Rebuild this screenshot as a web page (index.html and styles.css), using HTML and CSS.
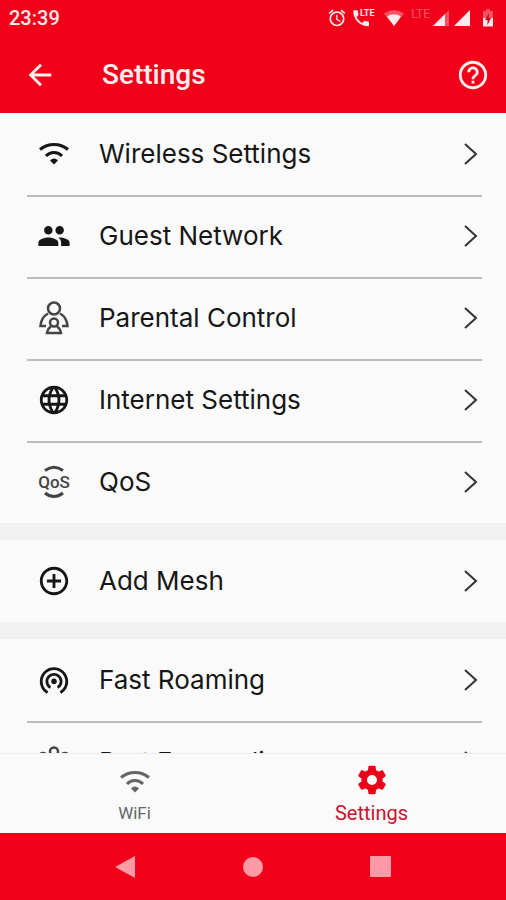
FILE: index.html
```
<!DOCTYPE html>
<html lang="en">
	<head>
		<meta charset="UTF-8" />
		<meta name="viewport" content="width=device-width, initial-scale=1.0" />
		<title>Settings</title>
		<link rel="stylesheet" href="styles.css">
	</head>
	<body>
		<div class="statusbar">
			<span class="time">23:39</span>
			<div class="indicators">
				<svg class="alarm" viewBox="0 0 24 24"><path d="M22 5.72l-4.6-3.86-1.29 1.53 4.6 3.86L22 5.72zM7.88 3.39L6.6 1.86 2 5.71l1.29 1.53 4.59-3.85zM12.5 8H11v6l4.75 2.85.75-1.23-4-2.37V8zM12 4c-4.97 0-9 4.03-9 9s4.02 9 9 9c4.97 0 9-4.03 9-9s-4.03-9-9-9zm0 16c-3.87 0-7-3.13-7-7s3.13-7 7-7 7 3.13 7 7-3.13 7-7 7z" /></svg>
				<svg class="call" viewBox="0 0 24 20">
					<path d="M4.6 9.2c1.3 2.5 3.2 4.5 5.6 5.8l1.9-1.9c.3-.3.6-.3.9-.2 1 .3 2.1.5 3.2.5.5 0 .8.4.8.9v3c0 .5-.3.9-.8.9C8 18.200 1.200 11.400 1.200 3.200c0-.5.4-.9.9-.9h3c.5 0 .9.4.9.9 0 1.100.2 2.200.5 3.200.1.3 0 .7-.2.9z" />
					<text x="8" y="8">LTE</text>
				</svg>
				<svg class="wifi-signal" viewBox="0 0 22 18">
					<path class="dim" d="M1 4.500Q11-2.500 21 4.500L11 17z" />
					<path d="M4 7.500Q11 3 18 7.500L11 17z" />
				</svg>
				<span class="lte">LTE</span>
				<svg class="signal" viewBox="0 0 18 18">
					<path class="dim" d="M17 1v16H1z" />
					<path d="M13 5v12H1z" />
				</svg>
				<svg class="signal" viewBox="0 0 18 18"><path d="M17 1v16H1z" /></svg>
				<svg class="battery" viewBox="0 0 12 20">
					<path class="dim" d="M4 1h4v2h3v7H1V3h3z" />
					<path d="M1 10h10v8.500H1z" />
					<path class="bolt" d="M7 5L3 12h2.500v5L9 10H6.500z" />
				</svg>
			</div>
		</div>

		<header class="appbar">
			<button type="button" aria-label="Back">
				<svg viewBox="0 0 24 24"><path d="M20 11H7.83l5.59-5.59L12 4l-8 8 8 8 1.41-1.41L7.83 13H20v-2z" /></svg>
			</button>
			<h1>Settings</h1>
			<button type="button" aria-label="Help">
				<svg viewBox="0 0 24 24"><path d="M11 18h2v-2h-2v2zm1-16C6.48 2 2 6.48 2 12s4.48 10 10 10 10-4.48 10-10S17.52 2 12 2zm0 18c-4.410 0-8-3.590-8-8s3.590-8 8-8 8 3.590 8 8-3.590 8-8 8zm0-14c-2.210 0-4 1.790-4 4h2c0-1.100.9-2 2-2s2 .9 2 2c0 2-3 1.750-3 5h2c0-2.250 3-2.500 3-5 0-2.210-1.790-4-4-4z" /></svg>
			</button>
		</header>

		<main>
			<ul>
				<li>
					<a href="#wireless">
						<svg class="icon line" viewBox="0 0 34 34">
							<path d="M3 12.500A22 22 0 0 1 31 12.500M9 19A11 11 0 0 1 25 19" />
							<path class="solid" d="M13 23.500Q17 19.500 21 23.500L17 27.500z" />
						</svg>
						<span>Wireless Settings</span>
						<svg class="chevron" viewBox="0 0 14 22"><path d="M1 1l11 10L1 21" /></svg>
					</a>
				</li>
				<li>
					<a href="#guest">
						<svg class="icon" viewBox="0 0 24 24"><path d="M16 11c1.660 0 2.990-1.340 2.990-3S17.660 5 16 5c-1.660 0-3 1.340-3 3s1.340 3 3 3zm-8 0c1.660 0 2.990-1.340 2.990-3S9.660 5 8 5C6.340 5 5 6.340 5 8s1.340 3 3 3zm0 2c-2.330 0-7 1.170-7 3.500V19h14v-2.500c0-2.330-4.670-3.500-7-3.500zm8 0c-.29 0-.62.02-.97.05 1.160.84 1.970 1.970 1.970 3.450V19h6v-2.500c0-2.330-4.670-3.500-7-3.500z" /></svg>
						<span>Guest Network</span>
						<svg class="chevron" viewBox="0 0 14 22"><path d="M1 1l11 10L1 21" /></svg>
					</a>
				</li>
				<li>
					<a href="#parental">
						<svg class="icon line thin" viewBox="0 0 34 34">
							<circle cx="17" cy="7.500" r="6" />
							<path d="M11 12.500C6.500 15 4 19 3.500 25H9M23 12.500C27.500 15 30 19 30.500 25H25" />
							<circle cx="17" cy="21.500" r="4" />
							<path d="M14 25.500C11.500 27 10.500 29 10 32H24C23.500 29 22.500 27 20 25.500" />
						</svg>
						<span>Parental Control</span>
						<svg class="chevron" viewBox="0 0 14 22"><path d="M1 1l11 10L1 21" /></svg>
					</a>
				</li>
				<li>
					<a href="#internet">
						<svg class="icon" viewBox="0 0 24 24"><path d="M11.990 2C6.470 2 2 6.480 2 12s4.470 10 9.990 10C17.520 22 22 17.520 22 12S17.520 2 11.990 2zm6.930 6h-2.950c-.32-1.250-.78-2.450-1.380-3.560 1.840.63 3.370 1.910 4.330 3.560zM12 4.040c.83 1.200 1.480 2.530 1.910 3.960h-3.820c.43-1.430 1.080-2.760 1.910-3.960zM4.260 14C4.100 13.360 4 12.690 4 12s.1-1.360.26-2h3.380c-.08.66-.14 1.320-.14 2s.06 1.340.14 2H4.260zm.82 2h2.950c.32 1.250.78 2.450 1.380 3.560-1.840-.63-3.370-1.900-4.330-3.560zm2.950-8H5.080c.96-1.660 2.490-2.930 4.330-3.560C8.810 5.550 8.350 6.750 8.030 8zM12 19.960c-.83-1.200-1.480-2.530-1.910-3.960h3.820c-.43 1.430-1.080 2.760-1.910 3.960zM14.340 14H9.660c-.09-.66-.16-1.320-.16-2s.07-1.350.16-2h4.680c.09.65.16 1.320.16 2s-.07 1.340-.16 2zm.25 5.560c.6-1.110 1.060-2.310 1.380-3.560h2.950c-.96 1.650-2.490 2.930-4.330 3.560zM16.360 14c.08-.66.14-1.320.14-2s-.06-1.340-.14-2h3.380c.16.64.26 1.310.26 2s-.1 1.360-.26 2h-3.380z" /></svg>
						<span>Internet Settings</span>
						<svg class="chevron" viewBox="0 0 14 22"><path d="M1 1l11 10L1 21" /></svg>
					</a>
				</li>
				<li>
					<a href="#qos">
						<svg class="icon qos" viewBox="0 0 34 34">
							<path d="M8 5.500Q17-1 26 5.500M8 28Q17 35 26 28" />
							<text x="17" y="23">QoS</text>
						</svg>
						<span>QoS</span>
						<svg class="chevron" viewBox="0 0 14 22"><path d="M1 1l11 10L1 21" /></svg>
					</a>
				</li>
			</ul>
			<ul>
				<li>
					<a href="#mesh">
						<svg class="icon" viewBox="0 0 24 24"><path d="M13 7h-2v4H7v2h4v4h2v-4h4v-2h-4V7zm-1-5C6.480 2 2 6.480 2 12s4.480 10 10 10 10-4.480 10-10S17.520 2 12 2zm0 18c-4.410 0-8-3.590-8-8s3.590-8 8-8 8 3.590 8 8-3.590 8-8 8z" /></svg>
						<span>Add Mesh</span>
						<svg class="chevron" viewBox="0 0 14 22"><path d="M1 1l11 10L1 21" /></svg>
					</a>
				</li>
			</ul>
			<ul>
				<li>
					<a href="#roaming">
						<svg class="icon" viewBox="0 0 24 24"><path d="M12 11c-1.100 0-2 .9-2 2s.9 2 2 2 2-.9 2-2-.9-2-2-2zm6 2c0-3.310-2.690-6-6-6s-6 2.690-6 6c0 2.220 1.210 4.150 3 5.190l1-1.740c-1.190-.7-2-1.970-2-3.450 0-2.210 1.790-4 4-4s4 1.790 4 4c0 1.480-.81 2.750-2 3.450l1 1.740c1.790-1.040 3-2.970 3-5.190zM12 3C6.480 3 2 7.480 2 13c0 3.700 2.010 6.920 4.990 8.650l1-1.730C5.610 18.530 4 15.960 4 13c0-4.420 3.580-8 8-8s8 3.580 8 8c0 2.960-1.610 5.530-4 6.920l1 1.730c2.990-1.730 5-4.950 5-8.650 0-5.520-4.480-10-10-10z" /></svg>
						<span>Fast Roaming</span>
						<svg class="chevron" viewBox="0 0 14 22"><path d="M1 1l11 10L1 21" /></svg>
					</a>
				</li>
				<li>
					<a href="#ports">
						<svg class="icon line thin" viewBox="0 0 34 34">
							<circle cx="17" cy="6.500" r="4" />
							<circle cx="6" cy="12" r="4" />
							<circle cx="28" cy="12" r="4" />
							<path d="M17 11v14M6 16v5l11 6 11-6v-5" />
						</svg>
						<span>Port Forwarding</span>
						<svg class="chevron" viewBox="0 0 14 22"><path d="M1 1l11 10L1 21" /></svg>
					</a>
				</li>
			</ul>
		</main>

		<nav class="tabs">
			<a href="#wifi">
				<svg class="icon line" viewBox="0 0 34 34">
					<path d="M3 14.500A22 22 0 0 1 31 14.500M9 21A11 11 0 0 1 25 21" />
					<path class="solid" d="M13 25.500Q17 21.500 21 25.500L17 29.500z" />
				</svg>
				<span>WiFi</span>
			</a>
			<a class="active" href="#settings">
				<svg class="icon" viewBox="0 0 24 24"><path d="M19.430 12.980c.04-.32.07-.64.07-.98s-.03-.66-.07-.98l2.110-1.650c.19-.15.24-.42.12-.64l-2-3.460c-.12-.22-.39-.3-.61-.22l-2.490 1c-.52-.4-1.080-.73-1.690-.98l-.38-2.650C14.460 2.180 14.250 2 14 2h-4c-.25 0-.46.18-.49.42l-.38 2.650c-.61.25-1.170.59-1.690.98l-2.490-1c-.23-.09-.49 0-.61.22l-2 3.460c-.13.22-.07.49.12.64l2.110 1.650c-.04.32-.07.65-.07.98s.03.66.07.98l-2.110 1.650c-.19.15-.24.42-.12.64l2 3.460c.12.22.39.3.61.22l2.490-1c.52.4 1.080.73 1.690.98l.38 2.650c.03.24.24.42.49.42h4c.25 0 .46-.18.49-.42l.38-2.650c.61-.25 1.170-.59 1.690-.98l2.490 1c.23.09.49 0 .61-.22l2-3.460c.12-.22.07-.49-.12-.64l-2.110-1.650zM12 15.500c-1.930 0-3.500-1.570-3.500-3.500s1.570-3.500 3.500-3.500 3.500 1.570 3.500 3.500-1.570 3.500-3.500 3.500z" /></svg>
				<span>Settings</span>
			</a>
		</nav>

		<div class="softkeys">
			<button type="button" aria-label="Back"><svg viewBox="0 0 24 24"><path d="M22 1v22L2 12z" /></svg></button>
			<button type="button" aria-label="Home"><svg viewBox="0 0 24 24"><circle cx="12" cy="12" r="10" /></svg></button>
			<button type="button" aria-label="Recent apps"><svg viewBox="0 0 24 24"><rect x="1" y="1" width="21" height="21" rx="1" /></svg></button>
		</div>
	</body>
</html>
```

FILE: styles.css
```
* {
	box-sizing: border-box;
}

body {
	display: flex;
	flex-direction: column;
	height: 100vh;
	margin: 0;
	background: #fafafa;
	color: #161616;
	font-family: Roboto, sans-serif;
}

svg {
	display: block;
	flex: none;
	fill: currentColor;
}

button {
	display: flex;
	padding: 0;
	border: 0;
	background: none;
	color: inherit;
}

a {
	color: inherit;
	text-decoration: none;
}

/* Status bar */
.statusbar {
	display: flex;
	flex: none;
	justify-content: space-between;
	align-items: center;
	height: 36px;
	padding: 0 12px 0 9px;
	background: #f20019;
	color: #ffe9ea;
}

.time {
	font-size: 20px;
	font-weight: 500;
}

.indicators {
	display: flex;
	align-items: center;
}

.dim {
	opacity: 0.35;
}

.alarm {
	width: 20px;
	height: 20px;
	margin-right: 5px;
}

.call {
	width: 24px;
	height: 20px;
	margin-right: 7px;
}

.call text {
	font-size: 9px;
	font-weight: 700;
	/* keeps the letters clear of the handset */
	stroke: #f20019;
	stroke-width: 2px;
	paint-order: stroke;
}

.wifi-signal {
	width: 22px;
	height: 18px;
	margin-right: 6px;
}

.lte {
	align-self: flex-start;
	margin-right: 2px;
	font-size: 12px;
	line-height: 12px;
	opacity: 0.35;
}

.signal {
	width: 18px;
	height: 18px;
	margin-right: 3px;
}

.battery {
	width: 12px;
	height: 20px;
	margin-left: 8px;
}

.bolt {
	fill: #d50016;
}

/* Title bar */
.appbar {
	display: flex;
	flex: none;
	align-items: center;
	height: 77px;
	padding: 0 16px 0 23px;
	background: #f20019;
	color: #fff0f0;
}

.appbar svg {
	width: 34px;
	height: 34px;
}

.appbar h1 {
	flex: 1;
	margin: 0 0 0 45px;
	font-size: 28px;
	font-weight: 500;
}

/* Settings list */
main {
	flex: 1;
	min-height: 0;
	overflow-y: auto;
	scrollbar-width: none;
}

ul {
	margin: 0;
	padding: 0 24px 0 27px;
	list-style: none;
}

ul + ul {
	border-top: 17px solid #f1f1f1;
}

li {
	height: 82px;
}

li + li {
	padding-bottom: 2px;
	border-top: 2px solid #bbb;
}

li a {
	display: flex;
	align-items: center;
	height: 100%;
	padding: 0 4px 0 10px;
	font: 26px Inter, sans-serif;
}

li span {
	flex: 1;
	margin-left: 28px;
	padding-bottom: 2px;
}

.icon {
	width: 34px;
	height: 34px;
}

.line {
	fill: none;
	stroke: currentColor;
	stroke-width: 3;
}

.thin {
	color: #444;
	stroke-width: 2.5;
}

.solid {
	fill: currentColor;
	stroke: none;
}

.qos {
	color: #444;
}

.qos path {
	fill: none;
	stroke: currentColor;
	stroke-width: 3;
}

.qos text {
	font: 500 17px Roboto, sans-serif;
	text-anchor: middle;
}

.chevron {
	width: 14px;
	height: 22px;
	fill: none;
	stroke: #333;
	stroke-width: 2;
}

/* Bottom tabs */
.tabs {
	display: flex;
	flex: none;
	height: 80px;
	padding: 0 16px;
	border-top: 1px solid #eee;
	color: #666;
}

.tabs a {
	display: flex;
	flex: 1;
	flex-direction: column;
	align-items: center;
	padding-top: 9px;
	font-size: 17px;
	line-height: 32px;
}

.tabs .active {
	color: #c8102e;
	font-size: 20px;
}

.active .icon {
	color: #ea0018;
}

/* System buttons */
.softkeys {
	display: flex;
	flex: none;
	height: 67px;
	padding: 0 12%;
	background: #f20019;
	color: #ff9aa6;
}

.softkeys button {
	flex: 1;
	justify-content: center;
	align-items: center;
}

.softkeys svg {
	width: 24px;
	height: 24px;
}
```
